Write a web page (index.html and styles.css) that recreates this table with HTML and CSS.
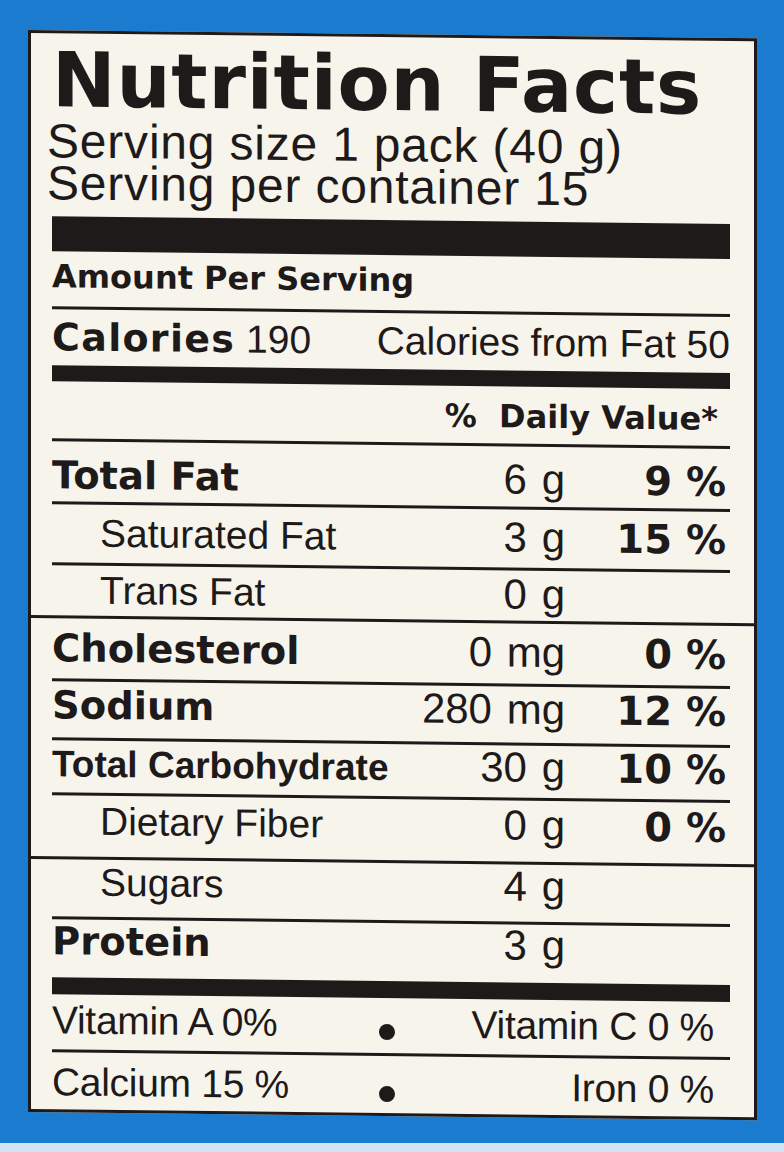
FILE: index.html
```html
<!DOCTYPE html>
<html lang="en">
<head>
<meta charset="utf-8">
<title>Nutrition Facts</title>
<link rel="stylesheet" href="styles.css">
</head>
<body>
<div class="page">
  <div class="label">
    <h1 class="title in">Nutrition Facts</h1>
    <div class="serving first">Serving size 1 pack (40 g)</div>
    <div class="serving">Serving per container 15</div>
    <div class="bar bar-lg in"></div>
    <div class="amount in">Amount Per Serving</div>
    <div class="rule in"></div>
    <div class="calories in">
      <span><b class="cal-b">Calories</b> 190</span>
      <span>Calories from Fat 50</span>
    </div>
    <div class="bar bar-md in"></div>
    <div class="dv in">%&nbsp; Daily Value*</div>
    <div class="rule in"></div>

    <div class="row r-totfat in"><span class="lab b">Total Fat</span><span class="amt">6 g</span><span class="pct">9 %</span></div>
    <div class="rule in"></div>
    <div class="row r-satfat in"><span class="lab ind">Saturated Fat</span><span class="amt">3 g</span><span class="pct">15 %</span></div>
    <div class="rule in"></div>
    <div class="row r-trans in"><span class="lab ind">Trans Fat</span><span class="amt">0 g</span><span class="pct"></span></div>
    <div class="rule"></div>
    <div class="row r-chol in"><span class="lab b">Cholesterol</span><span class="amt">0 mg</span><span class="pct">0 %</span></div>
    <div class="rule in"></div>
    <div class="row r-sodium in"><span class="lab b">Sodium</span><span class="amt">280 mg</span><span class="pct">12 %</span></div>
    <div class="rule in"></div>
    <div class="row r-carb in"><span class="lab bc">Total Carbohydrate</span><span class="amt">30 g</span><span class="pct">10 %</span></div>
    <div class="rule in"></div>
    <div class="row r-fiber in"><span class="lab ind">Dietary Fiber</span><span class="amt">0 g</span><span class="pct">0 %</span></div>
    <div class="rule"></div>
    <div class="row r-sugars in"><span class="lab ind">Sugars</span><span class="amt">4 g</span><span class="pct"></span></div>
    <div class="rule in"></div>
    <div class="row r-protein in"><span class="lab b">Protein</span><span class="amt">3 g</span><span class="pct"></span></div>
    <div class="bar bar-sm in"></div>

    <div class="vit r-vita in"><span>Vitamin A 0%</span><span class="dot-cell"><span class="dot"></span></span><span class="vr">Vitamin C 0 %</span></div>
    <div class="rule in"></div>
    <div class="vit r-calc in"><span>Calcium 15 %</span><span class="dot-cell"><span class="dot"></span></span><span class="vr">Iron 0 %</span></div>
  </div>
  <div class="strip"></div>
</div>
</body>
</html>
```

FILE: styles.css
```css
html, body {
  margin: 0;
  padding: 0;
}

body {
  width: 784px;
  height: 1152px;
  overflow: hidden;
  background: #1a7bcf;
  color: #1e1a1a;
  font-family: "Liberation Sans", Arial, sans-serif;
}

.page {
  height: 1152px;
  display: flex;
  flex-direction: column;
}

.label {
  margin: 30px 0 0 28px;
  width: 729px;
  height: 1082px;
  box-sizing: border-box;
  border: 3px solid #1e1a1a;
  background: #f7f4ec;
  padding-top: 9px;
  display: flex;
  flex-direction: column;
  transform: skewY(0.65deg);
  transform-origin: 0 0;
}

.in {
  margin-left: 21px;
  margin-right: 24px;
}

.title {
  margin-top: 0;
  margin-bottom: 0;
  height: 76px;
  font-family: "DejaVu Sans", sans-serif;
  font-weight: 700;
  font-size: 76px;
  line-height: 76px;
  letter-spacing: 0.8px;
  white-space: nowrap;
}

.serving {
  margin-left: 16px;
  height: 42px;
  font-size: 48px;
  line-height: 42px;
  letter-spacing: 0.8px;
  white-space: nowrap;
}

.serving.first {
  margin-top: 2px;
}

.bar {
  background: #1e1a1a;
  flex: none;
}

.bar-lg {
  margin-top: 12px;
  height: 35px;
}

.bar-md {
  height: 16px;
}

.bar-sm {
  height: 17px;
}

.rule {
  height: 3px;
  background: #1e1a1a;
  flex: none;
}

.amount {
  box-sizing: border-box;
  height: 55px;
  padding-top: 9px;
  font-family: "DejaVu Sans", sans-serif;
  font-weight: 700;
  font-size: 32px;
  line-height: 32px;
}

.calories {
  box-sizing: border-box;
  height: 56px;
  padding-top: 9px;
  display: flex;
  justify-content: space-between;
  align-items: baseline;
  font-size: 39px;
  line-height: 38px;
  white-space: nowrap;
}

.cal-b {
  font-family: "DejaVu Sans", sans-serif;
  font-weight: 700;
  font-size: 38px;
  letter-spacing: 1.3px;
}

.dv {
  box-sizing: border-box;
  height: 57px;
  padding-top: 15px;
  padding-right: 12px;
  text-align: right;
  font-family: "DejaVu Sans", sans-serif;
  font-weight: 700;
  font-size: 32px;
  line-height: 30px;
}

.row {
  box-sizing: border-box;
  display: grid;
  grid-template-columns: 363px 150px 161px;
  align-items: baseline;
  line-height: 40px;
  white-space: nowrap;
}

.lab {
  font-size: 39px;
}

.lab.b {
  font-family: "DejaVu Sans", sans-serif;
  font-weight: 700;
  font-size: 38.5px;
}

.lab.bc {
  font-family: "Liberation Sans", Arial, sans-serif;
  font-weight: 700;
  font-size: 37px;
}

.lab.ind {
  padding-left: 48px;
}

.amt {
  text-align: right;
  font-size: 42px;
  word-spacing: 3px;
}

.pct {
  text-align: right;
  font-family: "DejaVu Sans", sans-serif;
  font-weight: 700;
  font-size: 40px;
}

.r-totfat  { height: 60px; padding-top: 13px; }
.r-satfat  { height: 58px; padding-top: 8px; }
.r-trans   { height: 50px; padding-top: 4px; }
.r-chol    { height: 60px; padding-top: 9px; }
.r-sodium  { height: 56px; padding-top: 3px; }
.r-carb    { height: 52px; padding-top: 2px; }
.r-fiber   { height: 61px; padding-top: 5px; }
.r-sugars  { height: 57px; padding-top: 2px; }
.r-protein { height: 58px; padding-top: 1px; }

.vit {
  box-sizing: border-box;
  display: grid;
  grid-template-columns: 300px 70px 1fr;
  align-items: baseline;
  font-size: 39px;
  line-height: 40px;
  letter-spacing: -0.3px;
  white-space: nowrap;
}

.r-vita { height: 55px; padding-top: 6px; }
.r-calc { height: 57px; padding-top: 10px; }

.dot-cell {
  text-align: center;
}

.dot {
  display: inline-block;
  width: 16px;
  height: 16px;
  border-radius: 50%;
  background: #1e1a1a;
  vertical-align: -3px;
}

.vr {
  text-align: right;
  padding-right: 16px;
}

.strip {
  margin-top: auto;
  height: 9px;
  background: #d3e4f2;
}
```
